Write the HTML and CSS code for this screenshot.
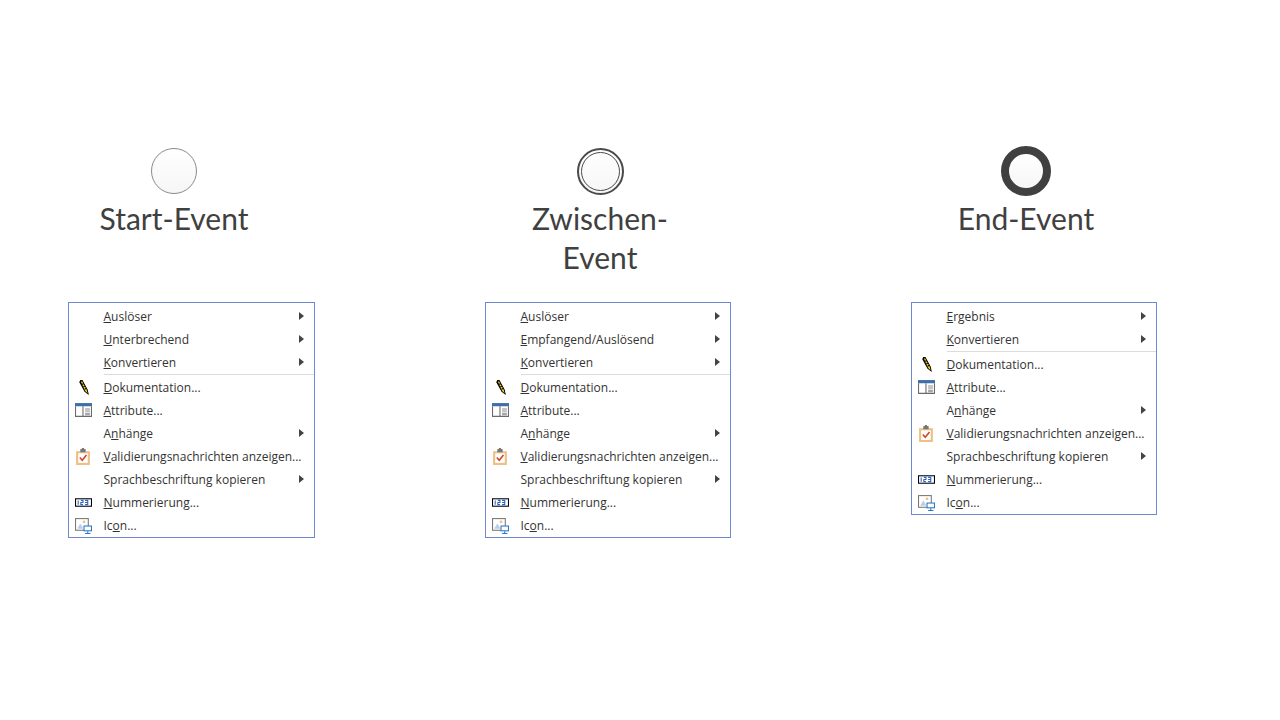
FILE: index.html
```html
<!DOCTYPE html>
<html lang="de">
<head>
  <meta charset="UTF-8">
  <title>Events</title>
  <link rel="stylesheet" href="styles.css">
</head>
<body>
  <svg class="defs" width="0" height="0">
    <symbol id="i-pencil" viewBox="0 0 16 16">
      <path d="M5 1 L7 1 L12 10 L13 15 L9 12 L4 3 Z" fill="#000"/>
      <path d="M5.6 2.5 L6.6 2.2 L11 10.2 L11.8 13.4 L9.6 11.4 Z" fill="#f2d21f"/>
      <path d="M6.6 5 L8.4 4.4 M7.8 7.4 L9.6 6.6 M9 9.6 L10.8 8.8" stroke="#000" stroke-width="1"/>
    </symbol>
    <symbol id="i-table" viewBox="0 0 16 16">
      <rect x="0" y="1" width="16" height="13" fill="#fff" stroke="none"/>
      <rect x="0" y="1" width="16" height="3" fill="#3f6fa8"/>
      <path d="M.5 4 V13.5 H15.5 V4 M7.5 4 V13.5" fill="none" stroke="#6b6b6b"/>
      <path d="M9.5 6.5 H14 M9.5 8.5 H14 M9.5 10.5 H14 M9.5 12 H14" stroke="#8a8a8a"/>
    </symbol>
    <symbol id="i-check" viewBox="0 0 16 16">
      <rect x="1" y="3" width="13" height="13" fill="#eec083"/>
      <rect x="3" y="5" width="9" height="9" fill="#fff"/>
      <rect x="5" y="1" width="5" height="3" fill="#777"/>
      <rect x="6.5" y="0" width="2" height="2" fill="#777"/>
      <path d="M4.5 9 L6.8 11.5 L10.8 6.5" fill="none" stroke="#d2452c" stroke-width="1.5"/>
    </symbol>
    <symbol id="i-num" viewBox="0 0 16 16">
      <rect x=".5" y="4.5" width="15" height="7" fill="#fff" stroke="#000"/>
      <path d="M3 6 V10 M5.5 6 H7.5 V8 H5.5 V10 H7.5 M9.5 6 H12 V10 H9.5 M9.5 8 H12" fill="none" stroke="#2a62c4"/>
    </symbol>
    <symbol id="i-icon" viewBox="0 0 16 16">
      <rect x=".5" y="1.5" width="12" height="11" fill="#fff" stroke="#777"/>
      <path d="M2 11 L5 6 L8 11 Z" fill="#b9cfe6"/>
      <circle cx="8.5" cy="4.5" r="1.3" fill="#efc27f"/>
      <rect x="8" y="8" width="8" height="5.5" fill="#2a78c8"/>
      <rect x="9" y="9" width="6" height="3.5" fill="#fff"/>
      <path d="M12 13.5 V15 M9.5 15.5 H14.5" stroke="#2a78c8"/>
    </symbol>
  </svg>

  <div class="heads">
    <div class="head">
      <div class="event event-start"></div>
      <h2>Start-Event</h2>
    </div>
    <div class="head">
      <div class="event event-mid"><div></div></div>
      <h2>Zwischen-<br>Event</h2>
    </div>
    <div class="head">
      <div class="event event-end"></div>
      <h2>End-Event</h2>
    </div>
  </div>

  <div class="menus">
    <ul class="menu">
      <li class="more"><span><u>A</u>uslöser</span></li>
      <li class="more"><span><u>U</u>nterbrechend</span></li>
      <li class="more sep"><span><u>K</u>onvertieren</span></li>
      <li><svg><use href="#i-pencil"/></svg><span><u>D</u>okumentation...</span></li>
      <li><svg><use href="#i-table"/></svg><span><u>A</u>ttribute...</span></li>
      <li class="more"><span>A<u>n</u>hänge</span></li>
      <li><svg><use href="#i-check"/></svg><span><u>V</u>alidierungsnachrichten anzeigen...</span></li>
      <li class="more"><span>Sprachbeschriftung kopieren</span></li>
      <li><svg><use href="#i-num"/></svg><span><u>N</u>ummerierung...</span></li>
      <li><svg><use href="#i-icon"/></svg><span>Ic<u>o</u>n...</span></li>
    </ul>
    <ul class="menu">
      <li class="more"><span><u>A</u>uslöser</span></li>
      <li class="more"><span><u>E</u>mpfangend/Auslösend</span></li>
      <li class="more sep"><span><u>K</u>onvertieren</span></li>
      <li><svg><use href="#i-pencil"/></svg><span><u>D</u>okumentation...</span></li>
      <li><svg><use href="#i-table"/></svg><span><u>A</u>ttribute...</span></li>
      <li class="more"><span>A<u>n</u>hänge</span></li>
      <li><svg><use href="#i-check"/></svg><span><u>V</u>alidierungsnachrichten anzeigen...</span></li>
      <li class="more"><span>Sprachbeschriftung kopieren</span></li>
      <li><svg><use href="#i-num"/></svg><span><u>N</u>ummerierung...</span></li>
      <li><svg><use href="#i-icon"/></svg><span>Ic<u>o</u>n...</span></li>
    </ul>
    <ul class="menu">
      <li class="more"><span><u>E</u>rgebnis</span></li>
      <li class="more sep"><span><u>K</u>onvertieren</span></li>
      <li><svg><use href="#i-pencil"/></svg><span><u>D</u>okumentation...</span></li>
      <li><svg><use href="#i-table"/></svg><span><u>A</u>ttribute...</span></li>
      <li class="more"><span>A<u>n</u>hänge</span></li>
      <li><svg><use href="#i-check"/></svg><span><u>V</u>alidierungsnachrichten anzeigen...</span></li>
      <li class="more"><span>Sprachbeschriftung kopieren</span></li>
      <li><svg><use href="#i-num"/></svg><span><u>N</u>ummerierung...</span></li>
      <li><svg><use href="#i-icon"/></svg><span>Ic<u>o</u>n...</span></li>
    </ul>
  </div>
</body>
</html>
```
FILE: styles.css
```css
*{
  padding: 0;
  margin: 0;
  box-sizing: border-box;
}
body{
  width: 1280px;
  height: 720px;
  overflow: hidden;
  background: #fff;
  font-family: "Open Sans", "Noto Sans", sans-serif;
}
.defs{
  display: block;
}

/* top row with the three event symbols */
.heads{
  display: flex;
  gap: 126px;
  height: 302px;
  padding: 146px 0 0 24px;
}
.head{
  width: 300px;
  display: flex;
  flex-direction: column;
  align-items: center;
}
.head h2{
  font-family: Lato, "Liberation Sans", sans-serif;
  font-size: 30px;
  font-weight: 400;
  line-height: 39px;
  color: #404040;
  text-align: center;
  margin-top: 3px;
}
.event{
  width: 50px;
  height: 50px;
  border-radius: 50%;
  background: linear-gradient(#fff, #f6f6f6);
}
.event-start{
  width: 46px;
  height: 46px;
  margin: 2px;
  border: 1px solid #8a8a8a;
}
.event-mid{
  width: 47px;
  height: 47px;
  margin: 2px 1px 1px;
  border: 2px solid #4a4a4a;
  padding: 2px;
}
.event-mid div{
  width: 39px;
  height: 39px;
  border-radius: 50%;
  border: 1px solid #4a4a4a;
}
.event-end{
  border: 8px solid #404040;
}

/* context menus */
.menus{
  display: flex;
  align-items: flex-start;
  padding-left: 68px;
}
.menu{
  width: 247px;
  list-style: none;
  border: 1.5px solid #7088d2;
  padding: 1.5px 0 0;
  background: #fff;
  margin-right: 170px;
}
.menu + .menu + .menu{
  margin-right: 0;
  width: 246px;
}
.menu + .menu{
  width: 246px;
  margin-right: 180px;
}
.menu li{
  position: relative;
  display: flex;
  align-items: center;
  height: 23px;
  padding-left: 34.5px;
  font-size: 12px;
  color: #333;
  white-space: nowrap;
}
.menu li svg{
  position: absolute;
  left: 5.5px;
  top: 3px;
  width: 17px;
  height: 17px;
}
.menu li.more::after{
  content: "";
  position: absolute;
  right: 10px;
  top: 7px;
  border-left: 5px solid #444;
  border-top: 4px solid transparent;
  border-bottom: 4px solid transparent;
}
.menu li.sep{
  height: 25px;
  padding-bottom: 2px;
}
.menu li.sep::before{
  content: "";
  position: absolute;
  left: 34.5px;
  right: 0;
  top: 23px;
  height: 1px;
  background: #dcdcdc;
}
```
